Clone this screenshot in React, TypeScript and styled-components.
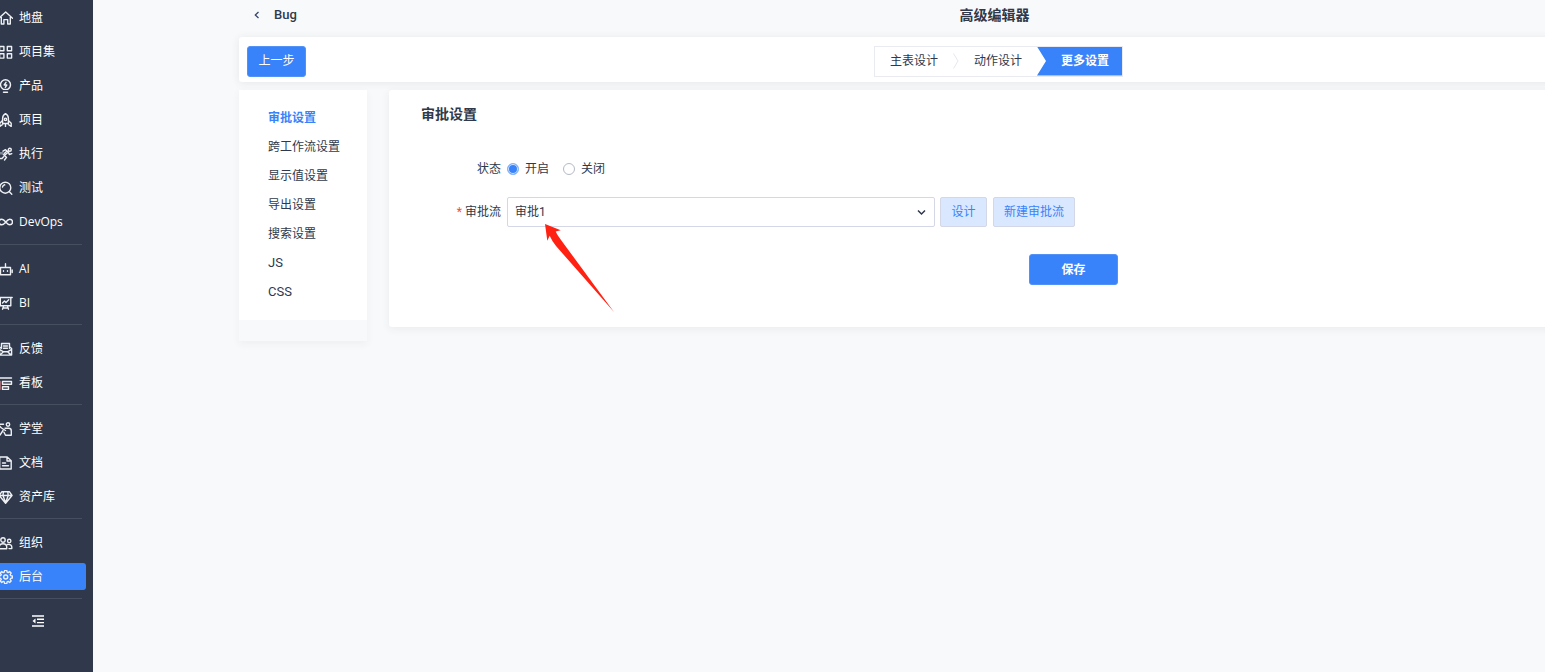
import React from "react";
import styled, { createGlobalStyle, css } from "styled-components";

const color = {
  nav: "#2f394b",
  navLine: "#454f60",
  page: "#f8f9fb",
  blue: "#3883fa",
  paleBlue: "#d9e8fe",
  text: "#2f394b",
  border: "#d4d7e6",
};

const GlobalStyle = createGlobalStyle`
  *, *::before, *::after { box-sizing: border-box; }
  body {
    margin: 0;
    background: ${color.page};
    color: ${color.text};
    font: 12px/20px Roboto, "Noto Sans CJK SC", sans-serif;
  }
  button, select, input { font: inherit; color: inherit; margin: 0; }
  a { color: inherit; text-decoration: none; }
  ul { list-style: none; margin: 0; padding: 0; }
  h1, h2 { margin: 0; font-size: 14px; line-height: 20px; font-weight: 700; }
`;

const Layout = styled.div`
  display: flex;
  min-height: 100vh;
  overflow: hidden;
`;

/* ---------- side navigation ---------- */

const Sidebar = styled.nav`
  flex: 0 0 93px;
  background: ${color.nav};
  color: #fff;
  font-family: "Open Sans", "Noto Sans CJK SC", sans-serif;
`;

const NavGroup = styled.ul`
  & + & {
    position: relative;
    padding-top: 12px;
  }
  & + &::before {
    content: "";
    position: absolute;
    top: 5px;
    left: 0;
    width: 82px;
    height: 1px;
    background: ${color.navLine};
  }
  &:first-child { padding-bottom: 1px; }
`;

const NavItem = styled.li`
  height: 34px;
  padding: 4px 7px 3px 0;
`;

const NavLink = styled.a<{ $active?: boolean }>`
  display: flex;
  align-items: center;
  gap: 6px;
  height: 27px;
  border-radius: 0 3px 3px 0;
  white-space: nowrap;
  ${(p) => p.$active && css`background: ${color.blue};`}
`;

const NavIcon = styled.svg`
  flex: none;
  width: 13px;
  height: 14px;
  fill: none;
  stroke: #eef0f4;
  stroke-width: 1.4;
  stroke-linecap: round;
  stroke-linejoin: round;
`;

const CollapseButton = styled.button`
  display: block;
  width: 76px;
  height: 32px;
  padding: 0;
  border: 0;
  background: none;
  cursor: pointer;
  svg { display: block; margin: 0 auto; }
`;

/* ---------- page ---------- */

const Workspace = styled.main`
  flex: 1 0 0;
  min-width: 0;
  margin: 0 -205px 0 146px;
`;

const TitleBar = styled.header`
  display: grid;
  grid-template-columns: 1fr auto 1fr;
  align-items: center;
  height: 37px;
  padding-bottom: 7px;
`;

const BackLink = styled.a`
  display: flex;
  align-items: center;
  gap: 14px;
  padding-left: 15px;
  font-size: 13px;
  font-weight: 500;
`;

const Toolbar = styled.div`
  display: grid;
  grid-template-columns: 1fr auto 1fr;
  align-items: center;
  height: 45px;
  padding: 3px 0 0 8px;
  margin-bottom: 8px;
  border-radius: 3px;
  background: #fff;
  box-shadow: 0 1px 8px rgba(40, 50, 60, 0.09);
`;

const PrimaryButton = styled.button<{ $wide?: boolean }>`
  justify-self: start;
  width: ${(p) => (p.$wide ? 89 : 59)}px;
  height: 31px;
  padding: 0;
  border: 1px solid #5292f7;
  border-radius: 3px;
  background: ${color.blue};
  color: #fff;
  font-weight: ${(p) => (p.$wide ? 700 : 400)};
  cursor: pointer;
`;

const Steps = styled.nav`
  display: flex;
  align-items: stretch;
  height: 31px;
  border: 1px solid #eaebf0;
`;

const Step = styled.a<{ $active?: boolean }>`
  display: flex;
  align-items: center;
  padding: 0 15px;
  ${(p) =>
    p.$active &&
    css`
      padding: 0 13px 0 24px;
      background: ${color.blue};
      color: #fff;
      font-weight: 700;
      clip-path: polygon(0 0, 100% 0, 100% 100%, 0 100%, 9px 50%);
    `}
`;

const StepMark = styled.svg`
  align-self: center;
  width: 6px;
  height: 16px;
  fill: none;
  stroke: #e6e7f0;
`;

const Columns = styled.div`
  display: flex;
  align-items: flex-start;
  gap: 22px;
`;

const MenuPanel = styled.aside`
  flex: 0 0 128px;
  padding-bottom: 21px;
  box-shadow: 0 3px 8px rgba(40, 50, 60, 0.05);
`;

const Menu = styled.ul`
  padding: 14px 0 13px 29px;
  background: #fff;
`;

const MenuLink = styled.a<{ $active?: boolean; $latin?: boolean }>`
  display: block;
  font-size: ${(p) => (p.$latin ? 13 : 12)}px;
  line-height: ${(p) => (p.$latin ? 28 : 29)}px;
  height: 29px;
  ${(p) => p.$active && css`color: ${color.blue}; font-weight: 700;`}
`;

const Panel = styled.section`
  flex: 1;
  padding: 14px 32px 42px;
  border-radius: 3px;
  background: #fff;
  box-shadow: 0 2px 8px rgba(40, 50, 60, 0.07);
`;

const Form = styled.form`
  display: grid;
  grid-template-columns: 80px auto;
  justify-content: start;
  align-items: center;
  column-gap: 6px;
  margin-top: 35px;
`;

const Label = styled.label`
  text-align: right;
  white-space: nowrap;
`;

const Required = styled.span`
  color: #fb4747;
  margin-right: 3px;
`;

const RadioGroup = styled.div`
  display: flex;
  gap: 14px;
`;

const RadioLabel = styled.label`
  display: flex;
  align-items: center;
  gap: 6px;
`;

const Radio = styled.input`
  appearance: none;
  width: 12px;
  height: 12px;
  border: 1px solid #b5b9c5;
  border-radius: 50%;
  background: #fff;
  &:checked {
    border-color: #8ab6fc;
    background: ${color.blue};
    box-shadow: inset 0 0 0 1px #d9e8fe;
  }
`;

const FieldRow = styled.div`
  display: flex;
  gap: 5px;
  margin-top: 18px;
`;

const RowLabel = styled(Label)`
  margin-top: 18px;
`;

const SelectBox = styled.div`
  position: relative;
  width: 428px;
`;

const Select = styled.select`
  display: block;
  appearance: none;
  width: 100%;
  height: 30px;
  padding: 0 28px 0 7px;
  border: 1px solid ${color.border};
  border-radius: 2px;
  background: #fff;
`;

const Chevron = styled.svg`
  position: absolute;
  right: 9px;
  top: 12px;
  pointer-events: none;
`;

const Pointer = styled.svg`
  position: absolute;
  left: 38px;
  top: 27px;
  pointer-events: none;
`;

const SoftButton = styled.button`
  min-width: 47px;
  height: 30px;
  padding: 0 10px;
  border: 1px solid ${color.border};
  border-radius: 2px;
  background: ${color.paleBlue};
  color: ${color.blue};
  cursor: pointer;
  & + & { margin-left: 1px; }
`;

const Actions = styled.div`
  grid-column: 2;
  margin: 27px 0 0 522px;
`;

/* ---------- data ---------- */

type Entry = { label: string; icon: React.ReactNode; active?: boolean };

const gearTeeth = Array.from({ length: 8 }, (_, i) => i * 45);
const gearOutline = gearTeeth
  .flatMap((deg) =>
    [
      [-16, 5.1],
      [-9, 6.7],
      [9, 6.7],
      [16, 5.1],
    ].map(([offset, r]) => {
      const a = ((deg + offset) * Math.PI) / 180;
      return `${(5.7 + r * Math.sin(a)).toFixed(2)},${(7 - r * Math.cos(a)).toFixed(2)}`;
    })
  )
  .join(" ");

const groups: Entry[][] = [
  [
    { label: "地盘", icon: <path d="M-1 7.2 5.7 1l6.8 6.2M1.3 6v7h2.6V8.6h3.8V13h2.6V6" /> },
    { label: "项目集", icon: <path d="M-.4 1.500h4.300v4.300H-.4zM7.300 1.500h4.300v4.300H7.300zM-.4 8.800h4.300v4.300H-.4zM7.300 8.800h4.300v4.300H7.300z" /> },
    { label: "产品", icon: <path d="M3.400 10.400C1.500 9.300.5 7.800.5 5.700a5 5 0 0 1 10 0c0 2.100-1 3.600-2.900 4.700zM3.500 13.300h4M6 3.300 4.200 6h2.600L5.300 8.300" /> },
    { label: "项目", icon: <><path d="M2.600 10.500V5.500C2.600 3.500 4 1.500 5.500.6 7 1.500 8.400 3.500 8.400 5.500v5zM2.500 7.500-.2 10.300v3.200l2.800-2M8.400 7.500l2.800 2.800v3.200l-2.800-2M5.500 11v2.500" /><circle cx="5.500" cy="6.300" r="1.200" /></> },
    { label: "执行", icon: <><circle cx="9.800" cy="2.700" r="1.500" /><path d="M3 4.200 5.500 2.700 8.500 5 4.300 8.500 6.500 10.300 4.500 13M3.600 9.700 2 11.500H-1M8.500 5.500 9.300 7.500 11.800 6.700M6.700 4.200 3.300 7.500" /><path stroke="#7e8896" strokeWidth="2.500" d="M-1 6.200h3.500" /></> },
    { label: "测试", icon: <><circle cx="5.300" cy="6.700" r="5.500" /><path d="m9.400 10.800 2.400 2.500M2.500 6a3 3 0 0 1 2.200-2.200" /></> },
    { label: "DevOps", icon: <path d="M5.800 7C4.300 5.200 3.300 4.200 1.900 4.200a2.800 2.800 0 0 0 0 5.600C3.300 9.800 4.300 8.800 5.800 7s2.500-2.800 3.900-2.800a2.800 2.800 0 0 1 0 5.600C8.300 9.800 7.300 8.800 5.800 7z" /> },
  ],
  [
    { label: "AI", icon: <path d="M.5 5.500h10v7.300H.5zM5.500 5.200V1.800M-1 8v2.500M12.200 8v2.500M3.500 8.800v.5M7.500 8.800v.5" /> },
    { label: "BI", icon: <path d="M-1 1.500h13.200M.3 1.700v8.100h10.500V1.700M2.500 7l2-2 1.500 1.500 2.700-2.700M3.500 10.200l-1 3M7.500 10.200l1 3M3.200 12h4.600" /> },
  ],
  [
    { label: "反馈", icon: <path d="M1.500 6.200V1.500h8v4.700M1.500 4.800-.4 6.500v6.600h12V6.500L9.500 4.800M-.2 7.700l3.700 2.100h4l3.700-2.100M3.500 4h4M3.500 6.300h4M3.500 9.800-.2 13M7.500 9.800l3.800 3.300" /> },
    { label: "看板", icon: <><path d="M0 2h11.500M2.500 5.500h9v2.800h-9zM2.500 10.700h6v2.800h-6z" /><path stroke="#c97b83" d="M0 5.500v7.700" /></> },
  ],
  [
    { label: "学堂", icon: <><circle cx="8" cy="2.500" r="1.700" /><path d="M-1 2.200h4.500M-1 3.500 1.500 6 5.500 8.500M5 6.300h3.700c1.700 0 2.600 1 2.600 2.600v4.300H5.500l-1.500-3M3 8.500l-3 4.500" /></> },
    { label: "文档", icon: <path d="M-.3 1h7.500l4 3.800V13H-.3zM7 1.200v3.800h4M2.500 7h3M2.500 9.800h6" /> },
    { label: "资产库", icon: <path d="M1.700 1.800h7.800l2.500 3.700-6.400 7.700L-.8 5.500zM-.5 5.500h12.300M3.400 2 3 5.500l2.600 7.300 2.600-7.300L7.800 2" /> },
  ],
  [
    { label: "组织", icon: <><circle cx="3" cy="4" r="2.200" /><circle cx="9.200" cy="5" r="1.700" /><path d="M-.7 12.800V11C-.7 9 1 7.800 3 7.800S6.700 9 6.700 11v1.800zM7.500 8.500c2.600-.6 4.300.6 4.300 2.600v1.500H9" /></> },
    { label: "后台", active: true, icon: <><circle cx="5.700" cy="7" r="2" /><polygon points={gearOutline} /></> },
  ],
];

const menu = ["审批设置", "跨工作流设置", "显示值设置", "导出设置", "搜索设置", "JS", "CSS"];

export default function App() {
  return (
    <>
      <GlobalStyle />
      <Layout>
        <Sidebar aria-label="主导航">
          {groups.map((entries, i) => (
            <NavGroup key={i}>
              {entries.map((e) => (
                <NavItem key={e.label}>
                  <NavLink href="#" $active={e.active}>
                    <NavIcon viewBox="0 0 13 14" aria-hidden="true">{e.icon}</NavIcon>
                    {e.label}
                  </NavLink>
                </NavItem>
              ))}
            </NavGroup>
          ))}
          <NavGroup as="div">
            <CollapseButton type="button" aria-label="收起导航">
              <svg width="12" height="12" viewBox="0 0 12 12" fill="none" stroke="#fff" strokeWidth="1.4">
                <path d="M0 1h12M5 4.300h7M5 7.600h7M0 11h12" />
                <path d="M3.500 3.500v5L.5 6z" fill="#fff" stroke="none" />
              </svg>
            </CollapseButton>
          </NavGroup>
        </Sidebar>

        <Workspace>
          <TitleBar>
            <BackLink href="#">
              <svg width="6" height="8" viewBox="0 0 6 8" fill="none" stroke="#35476f" strokeWidth="1.300">
                <path d="M4.500 1 1.300 4l3.200 3" />
              </svg>
              Bug
            </BackLink>
            <h1>高级编辑器</h1>
          </TitleBar>

          <Toolbar>
            <PrimaryButton type="button">上一步</PrimaryButton>
            <Steps aria-label="步骤">
              <Step href="#">主表设计</Step>
              <StepMark viewBox="0 0 6 16" aria-hidden="true">
                <path d="M.5 .5 5 8 .5 15.500" />
              </StepMark>
              <Step href="#">动作设计</Step>
              <Step href="#" $active aria-current="step">更多设置</Step>
            </Steps>
          </Toolbar>

          <Columns>
            <MenuPanel>
              <Menu>
                {menu.map((m, i) => (
                  <li key={m}>
                    <MenuLink href="#" $active={i === 0} $latin={/^[A-Z]/.test(m)}>{m}</MenuLink>
                  </li>
                ))}
              </Menu>
            </MenuPanel>

            <Panel>
              <h2>审批设置</h2>
              <Form onSubmit={(e) => e.preventDefault()}>
                <Label as="span" id="status-label">状态</Label>
                <RadioGroup role="radiogroup" aria-labelledby="status-label">
                  <RadioLabel><Radio type="radio" name="status" defaultChecked />开启</RadioLabel>
                  <RadioLabel><Radio type="radio" name="status" />关闭</RadioLabel>
                </RadioGroup>

                <RowLabel htmlFor="flow"><Required>*</Required>审批流</RowLabel>
                <FieldRow>
                  <SelectBox>
                    <Select id="flow" defaultValue="1">
                      <option value="1">审批1</option>
                    </Select>
                    <Chevron width="9" height="7" viewBox="0 0 9 7" fill="none" stroke={color.text} strokeWidth="1.500">
                      <path d="M1 1.500 4.500 5 8 1.500" />
                    </Chevron>
                    <Pointer width="70" height="89" viewBox="0 0 70 89" fill="#ff2213" aria-hidden="true">
                      <path d="M0 0 15.700 6.300 10.700 7.600Q12 11 16 16L69 88 11 22Q7 17 4.700 11.700L2.300 16.700Z" />
                    </Pointer>
                  </SelectBox>
                  <SoftButton type="button">设计</SoftButton>
                  <SoftButton type="button">新建审批流</SoftButton>
                </FieldRow>

                <Actions>
                  <PrimaryButton type="submit" $wide>保存</PrimaryButton>
                </Actions>
              </Form>
            </Panel>
          </Columns>
        </Workspace>
      </Layout>
    </>
  );
}
